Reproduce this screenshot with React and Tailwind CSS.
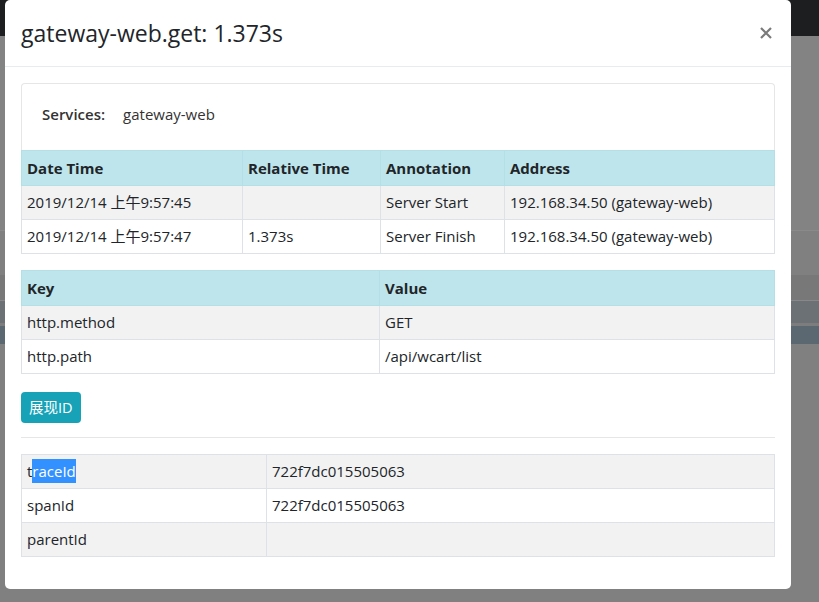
import React from 'react';

const font = { fontFamily: '"Open Sans", "Noto Sans CJK SC", sans-serif' };

const events = [
  { time: '2019/12/14 上午9:57:45', rel: '', ann: 'Server Start', addr: '192.168.34.50 (gateway-web)' },
  { time: '2019/12/14 上午9:57:47', rel: '1.373s', ann: 'Server Finish', addr: '192.168.34.50 (gateway-web)' },
];

const tags = [
  { key: 'http.method', value: 'GET' },
  { key: 'http.path', value: '/api/wcart/list' },
];

function Th({ children, className = '' }) {
  return (
    <th className={`border border-[#b3dfe6] bg-[#bee5eb] px-[5px] py-[5px] text-left font-bold leading-6 ${className}`}>
      {children}
    </th>
  );
}

function Td({ children, className = '' }) {
  return (
    <td className={`border border-[#dee2e6] px-[5px] py-[4px] leading-[25px] whitespace-nowrap ${className}`}>
      {children}
    </td>
  );
}

export default function App() {
  return (
    <div className="relative h-[602px] w-[819px] overflow-hidden bg-[#808080]" style={font}>
      {/* page behind the backdrop */}
      <div className="flex flex-col">
        <div className="h-[36px] bg-[#1c1e20]" />
        <div className="h-[194px] bg-[#838383]" />
        <div className="h-px bg-[#8a8a8a]" />
        <div className="h-[44px]" />
        <div className="h-[25px] bg-[#787878]" />
        <div className="h-px bg-[#888]" />
        <div className="h-[22px] bg-[#6c7176]" />
        <div className="h-[3px] bg-[#7d7d7d]" />
        <div className="h-[18px] bg-[#5b6872]" />
      </div>

      {/* modal */}
      <div className="absolute left-[5px] top-0 w-[786px] rounded-[5px] bg-white text-[#212529]">
        <div className="flex h-[67px] items-center justify-between border-b border-[#e9ecef] px-4">
          <h5 className="text-[23px] font-medium leading-none">gateway-web.get: 1.373s</h5>
          <button className="mr-[3px] text-[#7a7a7a]">
            <svg width="12" height="12" viewBox="0 0 12 12">
              <path d="M1 1L11 11M11 1L1 11" stroke="currentColor" strokeWidth="2.2" />
            </svg>
          </button>
        </div>

        <div className="p-4 text-[15px]">
          <div className="rounded-t-[4px] border border-b-0 border-[#e6e6e6] px-5 pb-[24px] pt-[18px]">
            <div className="flex items-center gap-[18px] leading-6">
              <span className="font-semibold text-[#333]">Services:</span>
              <span className="text-[#333]">gateway-web</span>
            </div>
          </div>

          <table className="mb-4 w-full table-fixed border-collapse">
            <colgroup>
              <col className="w-[221px]" />
              <col className="w-[138px]" />
              <col className="w-[124px]" />
              <col />
            </colgroup>
            <thead>
              <tr>
                <Th>Date Time</Th>
                <Th>Relative Time</Th>
                <Th>Annotation</Th>
                <Th>Address</Th>
              </tr>
            </thead>
            <tbody>
              {events.map((e, i) => (
                <tr key={i} className={i % 2 === 0 ? 'bg-[#f2f2f2]' : 'bg-white'}>
                  <Td>{e.time}</Td>
                  <Td>{e.rel}</Td>
                  <Td>{e.ann}</Td>
                  <Td>{e.addr}</Td>
                </tr>
              ))}
            </tbody>
          </table>

          <table className="mb-4 w-full table-fixed border-collapse">
            <colgroup>
              <col className="w-[358px]" />
              <col />
            </colgroup>
            <thead>
              <tr>
                <Th>Key</Th>
                <Th>Value</Th>
              </tr>
            </thead>
            <tbody>
              {tags.map((t, i) => (
                <tr key={t.key} className={i % 2 === 0 ? 'bg-[#f2f2f2]' : 'bg-white'}>
                  <Td>{t.key}</Td>
                  <Td>{t.value}</Td>
                </tr>
              ))}
            </tbody>
          </table>

          <button className="mt-[2px] rounded-[4px] bg-[#17a2b8] px-2 py-[5px] text-[14.5px] leading-[21px] text-white">
            展现ID
          </button>

          <hr className="mb-4 mt-[14px] border-t border-[#e6e6e6]" />

          <table className="mb-[16px] w-full table-fixed border-collapse">
            <colgroup>
              <col className="w-[245px]" />
              <col />
            </colgroup>
            <tbody>
              <tr className="bg-[#f2f2f2]">
                <Td>
                  t<span className="inline-block bg-[#3390ff] leading-6 text-white">raceId</span>
                </Td>
                <Td>722f7dc015505063</Td>
              </tr>
              <tr className="bg-white">
                <Td>spanId</Td>
                <Td>722f7dc015505063</Td>
              </tr>
              <tr className="bg-[#f2f2f2]">
                <Td>parentId</Td>
                <Td></Td>
              </tr>
            </tbody>
          </table>
        </div>
      </div>
    </div>
  );
}
